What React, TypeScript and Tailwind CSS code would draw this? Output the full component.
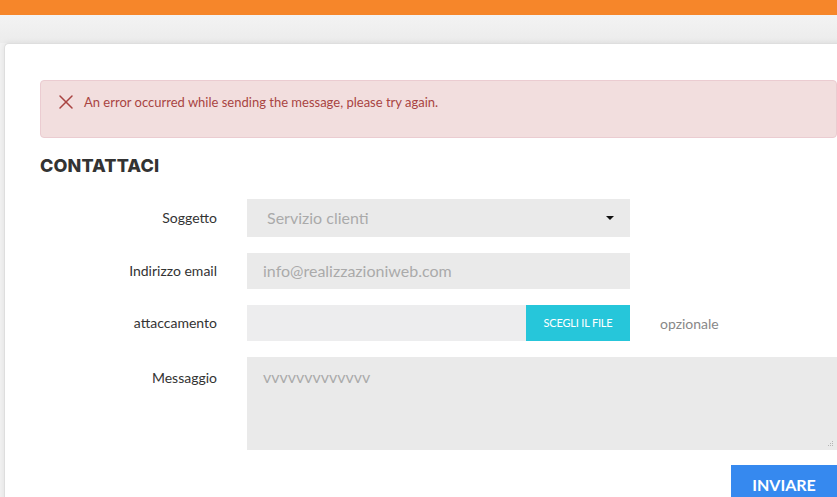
import { X } from 'lucide-react'

const FIELD_LABEL = 'w-[177px] shrink-0 text-right text-[14px] text-[#333]'

function Row({ label, children, top = false }: { label: string; children: React.ReactNode; top?: boolean }) {
    return (
        <div className={top ? 'flex items-start gap-[30px]' : 'flex items-center gap-[30px]'}>
            <div className={FIELD_LABEL + (top ? ' pt-[10px]' : ' -mt-[1px]')}>{label}</div>
            {children}
        </div>
    )
}

export default function App() {
    return (
        <div className="h-[497px] w-[837px] overflow-hidden bg-[#f2f2f2] font-['Lato',sans-serif]">
            {/* Top bar */}
            <div className="h-[15px] bg-[#f6862a]" />

            <div className="h-[28px] bg-gradient-to-b from-[#f3f3f3] to-[#ececec]" />

            {/* Card */}
            <div className="ml-[4px] w-[880px] rounded-tl-[5px] border-l border-t border-[#dedede] bg-white pl-[35px] pt-[36px] shadow-[0_0_6px_rgba(0,0,0,0.08)]">
                <div className="w-[797px]">
                    {/* Alert */}
                    <div className="flex h-[58px] items-start gap-[6px] rounded-[4px] border border-[#ebccd1] bg-[#f2dede] pl-[13px] pt-[9px] text-[#a94442]">
                        <X className="h-6 w-6" strokeWidth={1.5} />
                        <span className="pt-[3px] text-[13px] leading-[18px]">An error occurred while sending the message, please try again.</span>
                    </div>

                    <h2 className="mt-[16px] font-['Inter',sans-serif] text-[18px] font-extrabold leading-[24px] tracking-[0.1px] text-[#333]">
                        CONTATTACI
                    </h2>

                    <div className="mt-[21px] flex flex-col gap-[16px]">
                        <Row label="Soggetto">
                            <div className="flex h-[38px] w-[383px] items-center justify-between bg-[#eaeaea] pl-[20px] pr-[16px]">
                                <span className="text-[16px] text-[#aaa]">Servizio clienti</span>
                                <svg width="8" height="4" viewBox="0 0 8 4">
                                    <path d="M0 0h8L4 4z" fill="#111" />
                                </svg>
                            </div>
                        </Row>

                        <Row label="Indirizzo email">
                            <div className="flex h-[36px] w-[383px] items-center bg-[#eaeaea] pl-[16px]">
                                <span className="text-[16px] text-[#aaa]">info@realizzazioniweb.com</span>
                            </div>
                        </Row>

                        <Row label="attaccamento">
                            <div className="flex h-[36px] w-[383px]">
                                <div className="flex-1 bg-[#ededee]" />
                                <div className="flex w-[104px] items-center justify-center bg-[#26c6da] text-[11px] tracking-[-0.2px] text-white">
                                    SCEGLI IL FILE
                                </div>
                            </div>
                            <span className="text-[14px] text-[#888]">opzionale</span>
                        </Row>

                        <Row label="Messaggio" top>
                            <div className="relative h-[93px] w-[590px] bg-[#eaeaea] pl-[16px] pt-[8px]">
                                <span className="text-[16px] text-[#aaa]">vvvvvvvvvvvvv</span>
                                <svg className="absolute bottom-[3px] right-[3px]" width="6" height="6" viewBox="0 0 6 6">
                                    <g fill="#b5b5b5">
                                        <rect x="4" y="0" width="1" height="1" />
                                        <rect x="2" y="2" width="1" height="1" />
                                        <rect x="4" y="2" width="1" height="1" />
                                        <rect x="0" y="4" width="1" height="1" />
                                        <rect x="2" y="4" width="1" height="1" />
                                        <rect x="4" y="4" width="1" height="1" />
                                    </g>
                                </svg>
                            </div>
                        </Row>
                    </div>

                    <div className="mt-[15px] flex justify-end">
                        <button className="h-[40px] w-[106px] bg-[#3689ef] text-[16px] font-bold text-white">INVIARE</button>
                    </div>
                </div>
            </div>
        </div>
    )
}
